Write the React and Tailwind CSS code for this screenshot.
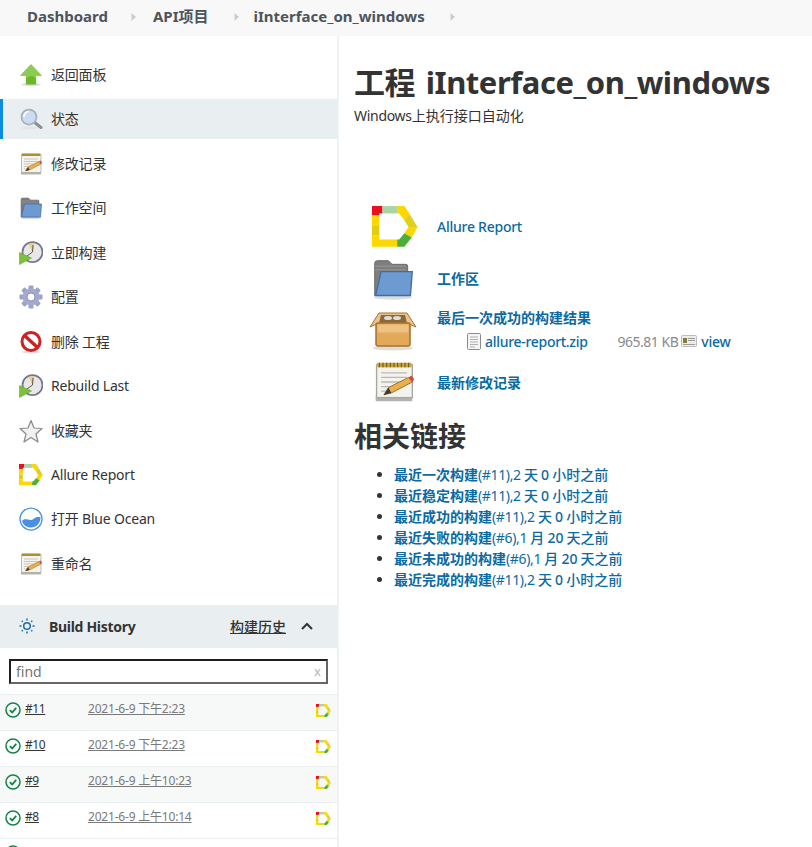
import React from "react";

const Sv = ({ s = 24, w, h, children, className = "" }) => (
  <svg width={w || s} height={h || s} viewBox="0 0 48 48" className={"shrink-0 " + className}>{children}</svg>
);

const ArrowUp = (p) => (
  <Sv {...p}>
    <ellipse cx="24" cy="43" rx="20" ry="3" fill="#ddd" />
    <path d="M24 3 L45 25 H34 V43 H14 V25 H3 Z" fill="#6db52c" stroke="#8ccb4f" strokeWidth="1" />
    <path d="M24 3 L45 25 H34 V31 Q24 22 14 31 V25 H3 Z" fill="#8ccc52" />
  </Sv>
);
const Search = (p) => (
  <Sv {...p}>
    <ellipse cx="22" cy="42" rx="18" ry="3" fill="#e4e4e4" />
    <path d="M30 30 L44 41" stroke="#8b8f94" strokeWidth="6" strokeLinecap="round" />
    <circle cx="20" cy="20" r="15" fill="#c9dcf2" stroke="#a9b0b8" strokeWidth="3.5" />
    <path d="M10 20 A10 10 0 0 1 20 9" stroke="#fff" strokeWidth="3" fill="none" />
  </Sv>
);
const Notepad = (p) => (
  <Sv {...p}>
    <rect x="4" y="38" width="40" height="7" rx="1" fill="#b3b3ae" />
    <rect x="5" y="5" width="39" height="36" fill="#f4f3ee" stroke="#a8a8a2" strokeWidth="1.5" />
    <rect x="6" y="3" width="37" height="5" fill="#c8a63c" />
    <path d="M8 3v5M12 3v5M16 3v5M20 3v5M24 3v5M28 3v5M32 3v5M36 3v5M40 3v5" stroke="#6d5a17" strokeWidth="1.2" />
    <path d="M10 14H38M10 19H38M10 24H30M10 29H22M10 34H18" stroke="#b9b9b4" strokeWidth="1.5" />
    <path d="M13 38 L18 30 L40 19 L44 24 L21 36 Z" fill="#e9b04c" stroke="#8d6a22" strokeWidth="1" />
    <path d="M40 19 L44 24 L46 21 L43 17 Z" fill="#d8453c" />
    <path d="M13 38 L18 30 L21 36 Z" fill="#3b3b3b" />
  </Sv>
);
const Folder = (p) => (
  <Sv {...p}>
    <ellipse cx="24" cy="44" rx="21" ry="2.5" fill="#ddd" />
    <path d="M4 7 Q4 4 7 4 H19 L23 8 H38 Q40 8 40 10 V42 H4 Z" fill="#7e7e7e" stroke="#666" strokeWidth="1" />
    <path d="M4 10H38M4 14H38" stroke="#9a9a9a" strokeWidth="1" />
    <path d="M11 16 H45 L43 42 H5 Z" fill="#6d9bd1" stroke="#3f6ea6" strokeWidth="1.5" />
  </Sv>
);
const Clock = (p) => (
  <Sv {...p}>
    <circle cx="27" cy="22" r="20" fill="#e8e8e8" stroke="#77768f" strokeWidth="3.5" />
    <path d="M27 22 L19 6 A18 18 0 0 1 31 5 Z" fill="#ead27c" />
    <path d="M27 22 L28 8 M27 22 L16 30" stroke="#555" strokeWidth="2" />
    <path d="M1 23 L25 34 L1 47 Z" fill="#7dc03a" stroke="#5a9a22" strokeWidth="1" />
  </Sv>
);
const Gear = (p) => (
  <Sv {...p}>
    <g fill="#9da2c8">
      {[0, 45, 90, 135, 180, 225, 270, 315].map((a) => (
        <rect key={a} x="19" y="1" width="10" height="12" rx="2" transform={`rotate(${a} 24 24)`} />
      ))}
    </g>
    <circle cx="24" cy="24" r="17" fill="#a4a9cf" />
    <circle cx="24" cy="24" r="8" fill="#fff" stroke="#74779c" strokeWidth="1.5" />
  </Sv>
);
const NoEntry = (p) => (
  <Sv {...p}>
    <ellipse cx="24" cy="44" rx="18" ry="3" fill="#ddd" />
    <circle cx="24" cy="23" r="18" fill="#fff" stroke="#cc2222" strokeWidth="6" />
    <path d="M11 11 L37 35" stroke="#cc2222" strokeWidth="7" />
  </Sv>
);
const Star = (p) => (
  <Sv {...p}>
    <path d="M24 3 L30 18 L46 19 L34 30 L38 46 L24 37 L10 46 L14 30 L2 19 L18 18 Z" fill="#f1f1f1" stroke="#8c8c8c" strokeWidth="2.5" strokeLinejoin="round" />
  </Sv>
);
const Allure = ({ s = 24, w, h, className = "" }) => (
  <svg width={w || s} height={h || (s * 40) / 44} viewBox="0 0 44 40" className={"shrink-0 " + className}>
    <path d="M0 0 H10 V7 H7 V9 H0 Z" fill="#e8101c" />
    <path d="M10 0 H24 V7 H10 Z" fill="#a8d5a5" />
    <path d="M24 0 H31 L36 7.500 L30.500 13 L26 7 H24 Z" fill="#fdd800" />
    <path d="M36 7.500 L43.500 20 H35 L30.500 13 Z" fill="#e0cf1e" />
    <path d="M43.500 20 L38 30 L31 26 L35 20 Z" fill="#fdd800" />
    <path d="M38 30 L31 39 H24 V32 H26 L31 26 Z" fill="#4caf38" />
    <path d="M7 32 H24 V39 H0 V28 H7 Z" fill="#fdd800" />
    <path d="M0 9 H7 V19 H0 Z" fill="#fdd800" />
    <path d="M0 19 H7 V28 H0 Z" fill="#e4cd10" />
  </svg>
);
const Ocean = (p) => (
  <Sv {...p}>
    <circle cx="24" cy="24" r="22" fill="#fff" stroke="#4a90e2" strokeWidth="2.5" />
    <path d="M6 28 C14 20 22 30 29 24 C34 20 39 19 43 21 C43 33 34 41 24 41 C15 41 8 36 6 28 Z" fill="#4a90e2" />
  </Sv>
);
const BoxIcon = (p) => (
  <Sv {...p}>
    <ellipse cx="24" cy="45" rx="20" ry="2.5" fill="#ddd" />
    <path d="M1 24 L10 10 H38 L47 24 L38 20 H10 Z" fill="#e9c48c" stroke="#a8712a" strokeWidth="1" />
    <path d="M12 12 H36 L38 20 H10 Z" fill="#8a6a3c" />
    <ellipse cx="19" cy="15" rx="4" ry="2" fill="#ddd" />
    <ellipse cx="28" cy="15" rx="4" ry="2" fill="#ddd" />
    <rect x="7" y="20" width="34" height="23" rx="2" fill="#e2a95a" stroke="#a8712a" strokeWidth="1.5" />
    <rect x="8.500" y="21.500" width="31" height="8" fill="#edc283" />
  </Sv>
);
const Doc = () => (
  <svg width="14" height="17" viewBox="0 0 14 17" className="shrink-0">
    <rect x="0.500" y="0.500" width="13" height="16" rx="1" fill="#f5f5f5" stroke="#8a8a8a" />
    <path d="M3 4H11M3 6.500H11M3 9H11M3 11.500H11M3 14H8" stroke="#b0b0b0" />
  </svg>
);
const Card = () => (
  <svg width="16" height="14" viewBox="0 0 16 14" className="shrink-0">
    <rect x="0.500" y="1.500" width="15" height="11" rx="1" fill="#ececec" stroke="#bdbdbd" />
    <rect x="2" y="4" width="4" height="5" fill="#8a7a3a" />
    <path d="M7 4.500H14M7 6.500H14M2 10.500H14" stroke="#9c9c9c" />
  </svg>
);
const Sun = () => (
  <svg width="16" height="16" viewBox="0 0 16 16" className="shrink-0" fill="none" stroke="#1a6ea8" strokeWidth="1.5">
    <circle cx="8" cy="8" r="3.300" />
    <path d="M8 0.500V2.500M8 13.500V15.500M0.500 8H2.500M13.500 8H15.500M2.700 2.700L3.800 3.800M12.200 12.200L13.300 13.300M2.700 13.300L3.800 12.200M12.200 3.800L13.300 2.700" />
  </svg>
);
const Check = () => (
  <svg width="16" height="16" viewBox="0 0 16 16" className="shrink-0" fill="none" stroke="#138347" strokeWidth="1.5">
    <circle cx="8" cy="8" r="7" />
    <path d="M4.800 8.200L7.200 10.500L11.200 5.800" strokeWidth="1.800" />
  </svg>
);
const Caret = () => (
  <svg width="6" height="10" viewBox="0 0 6 10" className="shrink-0 block"><path d="M0.500 1 L5 5 L0.500 9 Z" fill="#c9ccd0" /></svg>
);
const Chevron = () => (
  <svg width="12" height="8" viewBox="0 0 12 8" className="shrink-0 block" fill="none" stroke="#333" strokeWidth="2"><path d="M1 7 L6 2 L11 7" /></svg>
);

const tasks = [
  [ArrowUp, "返回面板"],
  [Search, "状态", true],
  [Notepad, "修改记录"],
  [Folder, "工作空间"],
  [Clock, "立即构建"],
  [Gear, "配置"],
  [NoEntry, "删除 工程"],
  [Clock, "Rebuild Last"],
  [Star, "收藏夹"],
  [Allure, "Allure Report"],
  [Ocean, "打开 Blue Ocean"],
  [Notepad, "重命名"],
];

const builds = [
  ["#11", "2021-6-9 下午2:23"],
  ["#10", "2021-6-9 下午2:23"],
  ["#9", "2021-6-9 上午10:23"],
  ["#8", "2021-6-9 上午10:14"],
];

const links = [
  ["最近一次构建", "(#11),2", " 天 0 小时之前"],
  ["最近稳定构建", "(#11),2", " 天 0 小时之前"],
  ["最近成功的构建", "(#11),2", " 天 0 小时之前"],
  ["最近失败的构建", "(#6),1", " 月 20 天之前"],
  ["最近未成功的构建", "(#6),1", " 月 20 天之前"],
  ["最近完成的构建", "(#11),2", " 天 0 小时之前"],
];

export default function App() {
  return (
    <div className="w-[812px] h-[847px] overflow-hidden bg-white text-[#333] text-[14px] font-['Noto_Sans','Noto_Sans_CJK_SC',sans-serif]">
      <div className="h-9 bg-[#f8f8f8] flex items-center pl-[27px] pb-[3px] text-[15px] font-bold text-[#4d545d]">
        <span>Dashboard</span>
        <span className="ml-[23px]"><Caret /></span>
        <span className="ml-[16px]">API项目</span>
        <span className="ml-[25px]"><Caret /></span>
        <span className="ml-[14px]">iInterface_on_windows</span>
        <span className="ml-[25px]"><Caret /></span>
      </div>
      <div className="flex h-[811px]">
        <aside className="w-[339px] shrink-0 border-r-2 border-[#eef2f4] pt-[19px]">
          <div>
            {tasks.map(([I, label, active], i) => (
              <div
                key={i}
                className={
                  "h-10 mb-[4.45px] flex items-center gap-2 pl-[16px] border-l-[3px] " +
                  (active ? "bg-[#e9eef1] border-[#0b8ce0]" : "border-transparent")
                }
              >
                <I s={24} />
                <span className="leading-none tracking-[-0.2px]">{label}</span>
              </div>
            ))}
          </div>
          <div className="mt-[21px] h-[43px] bg-[#e9eef1] flex items-center pl-[19px]">
            <Sun />
            <span className="ml-[14px] font-bold tracking-[-0.3px]">Build History</span>
            <span className="ml-auto underline font-medium">构建历史</span>
            <span className="ml-[15px] mr-[24px]"><Chevron /></span>
          </div>
          <div className="px-[9px] pt-[11px] pb-[10px]">
            <div className="h-[25px] flex items-center justify-between px-[5px] border-2 border-t-[#1f1f1f] border-l-[#1f1f1f] border-r-[#666] border-b-[#666]">
              <span className="text-[#757575]">find</span>
              <span className="text-[#b5b5b5] text-[13px]">x</span>
            </div>
          </div>
          {builds.map(([n, d], i) => (
            <div
              key={n}
              className={
                "h-9 flex border-t border-[#e9eef1] pl-[5px] pr-[6px] pt-[5px] " + (i % 2 === 0 ? "bg-[#f7f8f8]" : "bg-white")
              }
            >
              <span className="mt-[2px]"><Check /></span>
              <span className="ml-[4px] w-[63px] text-[12px] tracking-[-0.4px] underline leading-[18px] text-[#333]">{n}</span>
              <span className="text-[12px] tracking-[-0.2px] underline leading-[18px] text-[#7a7a7a]">{d}</span>
              <span className="ml-auto mt-[4px]"><Allure s={15} /></span>
            </div>
          ))}
          <div className="h-9 border-t border-[#e9eef1] pl-[5px] pt-[6px]"><Check /></div>
        </aside>
        <main className="flex-1 pl-[15px] pt-[25px]">
          <h1 className="text-[31px] leading-[42px] font-bold tracking-[-0.45px] [word-spacing:3px]">工程 iInterface_on_windows</h1>
          <p className="mt-[3px] leading-[20px]"><span className="tracking-[-0.3px]">Windows</span>上执行接口自动化</p>
          <div className="mt-[76px] font-semibold text-[#0b6aa2] flex flex-col">
            <div className="h-[49px] mb-[1px] flex items-center pl-[18px]">
              <div className="w-[65px]"><Allure w={46} h={42} /></div>
              <span className="font-medium tracking-[-0.25px]">Allure Report</span>
            </div>
            <div className="h-[53px] flex items-center pl-[17px]">
              <div className="w-[66px]"><Folder s={44} /></div>
              <span>工作区</span>
            </div>
            <div className="h-[53px] flex pl-[15px]">
              <div className="w-[68px] -mt-[2px]"><BoxIcon s={48} /></div>
              <div className="pt-[3px]">
                <div className="leading-[20px]">最后一次成功的构建结果</div>
                <div className="mt-[3px] ml-[30px] h-[20px] flex items-center font-medium">
                  <Doc />
                  <span className="ml-[4px] tracking-[-0.3px]">allure-report.zip</span>
                  <span className="ml-[30px] font-normal text-[#8a8a8a] tracking-[-0.5px]">965.81 KB</span>
                  <span className="ml-[3px]"><Card /></span>
                  <span className="ml-[4px] tracking-[-0.25px]">view</span>
                </div>
              </div>
            </div>
            <div className="h-[48px] flex items-center pl-[18px]">
              <div className="w-[65px]"><Notepad s={44} /></div>
              <span>最新修改记录</span>
            </div>
          </div>
          <h2 className="mt-[10px] text-[28px] leading-[40px] font-bold">相关链接</h2>
          <ul className="mt-[8px] ml-[40px] list-disc font-semibold text-[#0b6aa2] marker:text-[#333]">
            {links.map(([a, b, c]) => (
              <li key={a} className="leading-[21px]">
                {a}
                <span className="font-normal tracking-[-0.35px]">{b}</span>
                <span className="font-medium [word-spacing:-0.5px]">{c}</span>
              </li>
            ))}
          </ul>
        </main>
      </div>
    </div>
  );
}
